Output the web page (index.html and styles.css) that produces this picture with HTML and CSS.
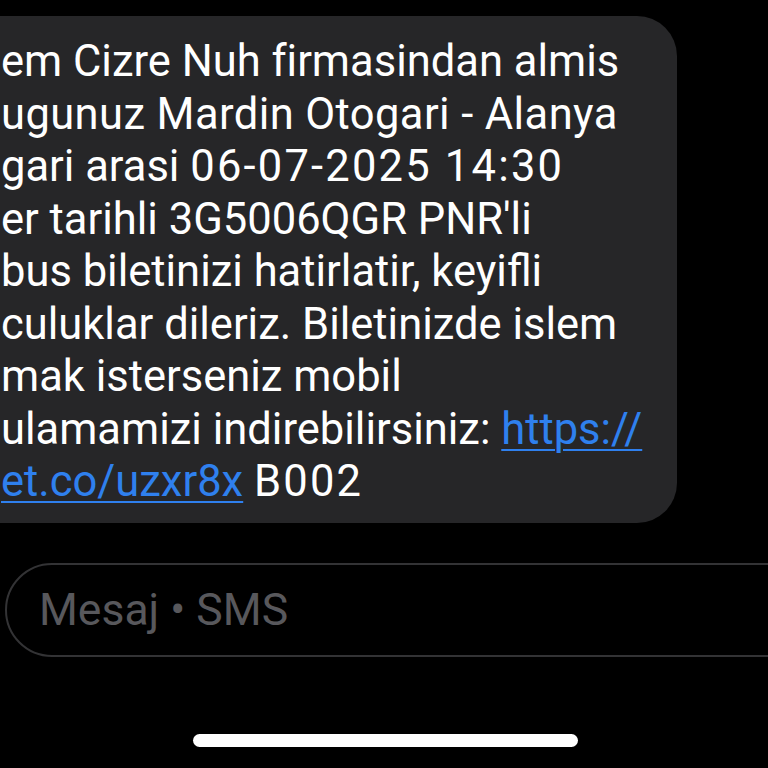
FILE: index.html
```html
<!DOCTYPE html>
<html lang="tr">
<head>
<meta charset="utf-8">
<link rel="stylesheet" href="styles.css">
</head>
<body>
<div class="screen">
  <div class="bubble">
    <div class="msg">
      <div class="line">em Cizre Nuh firmasindan almis</div>
      <div class="line wide">ugunuz Mardin Otogari - Alanya</div>
      <div class="line">gari arasi <span class="num">06-07-2025 14:30</span></div>
      <div class="line">er tarihli 3G5006QGR PNR'li</div>
      <div class="line">bus biletinizi hatirlatir, keyifli</div>
      <div class="line">culuklar dileriz. Biletinizde islem</div>
      <div class="line">mak isterseniz mobil</div>
      <div class="line">ulamamizi indirebilirsiniz: <a class="link">https://</a></div>
      <div class="line"><a class="link">et.co/uzxr8x</a> <span class="num">B002</span></div>
    </div>
  </div>
  <div class="composer">
    <span class="placeholder">Mesaj • SMS</span>
  </div>
  <div class="home-bar"></div>
</div>
</body>
</html>
```
FILE: styles.css
```css
html, body {
  margin: 0;
  padding: 0;
  background: #000;
}
.screen {
  width: 768px;
  height: 768px;
  overflow: hidden;
  background: #000;
  display: flex;
  flex-direction: column;
  font-family: Roboto, "Liberation Sans", sans-serif;
}
.bubble {
  margin-top: 16px;
  width: 677px;
  height: 507px;
  box-sizing: border-box;
  background: #262628;
  border-radius: 0 40px 40px 0;
  padding: 20px 0 0 1px;
}
.msg {
  color: #ffffff;
  font-size: 43.5px;
  line-height: 52.5px;
  white-space: nowrap;
}
.wide {
  letter-spacing: 0.4px;
}
.num {
  letter-spacing: 2.2px;
}
.link {
  color: #2f80ee;
  text-decoration: underline;
  text-decoration-thickness: 2px;
  text-underline-offset: 5px;
}
.composer {
  margin-top: 40px;
  margin-left: 5px;
  width: 820px;
  height: 94px;
  box-sizing: border-box;
  border: 2px solid #333335;
  border-radius: 47px;
  display: flex;
  align-items: center;
  padding-left: 32px;
}
.placeholder {
  color: #58585c;
  font-size: 44.5px;
}
.home-bar {
  margin: 77px auto 0;
  width: 385px;
  height: 13px;
  border-radius: 7px;
  background: #fff;
  position: relative;
  left: 1px;
}
```
